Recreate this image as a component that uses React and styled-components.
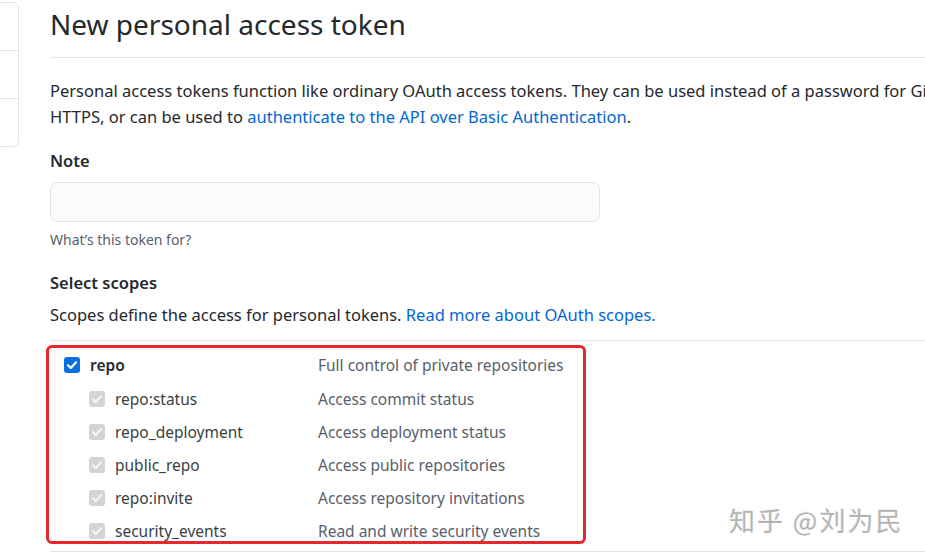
import React from 'react'
import styled, { createGlobalStyle } from 'styled-components'

const GlobalStyle = createGlobalStyle`
  html, body {
    margin: 0;
    padding: 0;
    background: #fff;
    overflow: hidden;
  }
  body {
    width: 925px;
    height: 560px;
    font-family: "Noto Sans", "Open Sans", Arial, sans-serif;
    color: #24292e;
  }
`

const scopes = [
  { name: 'repo', desc: 'Full control of private repositories', main: true },
  { name: 'repo:status', desc: 'Access commit status' },
  { name: 'repo_deployment', desc: 'Access deployment status' },
  { name: 'public_repo', desc: 'Access public repositories' },
  { name: 'repo:invite', desc: 'Access repository invitations' },
  { name: 'security_events', desc: 'Read and write security events' },
]

const Check = ({ disabled }) => (
  <Box disabled={disabled}>
    <svg width="12" height="12" viewBox="0 0 12 12">
      <path d="M2 6.2 L4.8 9 L10 3.2" fill="none" strokeWidth="2.2" strokeLinecap="round" strokeLinejoin="round" />
    </svg>
  </Box>
)

const App = () => {
  return (
    <Page>
      <GlobalStyle />
      <Sidebar>
        <SideItem />
        <SideItem />
        <SideItem />
      </Sidebar>
      <Main>
        <Title>New personal access token</Title>
        <Intro>
          <Line>Personal access tokens function like ordinary OAuth access tokens. They can be used instead of a password for Git over</Line>
          <Line>HTTPS, or can be used to <Link>authenticate to the API over Basic Authentication</Link>.</Line>
        </Intro>
        <Label>Note</Label>
        <Input />
        <Hint>What’s this token for?</Hint>
        <Label top="21px">Select scopes</Label>
        <Desc>
          Scopes define the access for personal tokens. <Link>Read more about OAuth scopes.</Link>
        </Desc>
        <ScopeGroup>
          <Highlight>
            {scopes.map((s) => (
              <ScopeRow key={s.name} main={s.main}>
                <ScopeName main={s.main}>
                  <Check disabled={!s.main} />
                  <span>{s.name}</span>
                </ScopeName>
                <ScopeDesc>{s.desc}</ScopeDesc>
              </ScopeRow>
            ))}
          </Highlight>
        </ScopeGroup>
        <ScopeGroup />
      </Main>
      <Watermark>知乎 @刘为民</Watermark>
    </Page>
  )
}

export default App

const Page = styled.div`
  position: relative;
  display: flex;
  align-items: flex-start;
  gap: 31px;
  width: 925px;
  height: 560px;
  overflow: hidden;
`
const Sidebar = styled.div`
  flex: none;
  width: 40px;
  margin-left: -21px;
  margin-top: 2px;
  border: 1px solid #e1e4e8;
  border-radius: 6px;
  box-sizing: border-box;
`
const SideItem = styled.div`
  height: 47px;
  & + & {
    border-top: 1px solid #e1e4e8;
  }
`
const Main = styled.div`
  flex: none;
  width: 1000px;
`
const Title = styled.h1`
  margin: 0;
  padding-top: 4px;
  height: 58px;
  box-sizing: border-box;
  border-bottom: 1px solid #e1e4e8;
  font-size: 28px;
  font-weight: 400;
  line-height: 40px;
  color: #24292e;
`
const Intro = styled.div`
  margin-top: 20px;
  font-size: 16.5px;
  line-height: 26px;
  color: #24292e;
`
const Line = styled.div`
  white-space: nowrap;
`
const Link = styled.span`
  color: #0366d6;
`
const Label = styled.div`
  margin-top: ${(p) => p.top || '19px'};
  font-size: 16.5px;
  font-weight: 600;
  line-height: 24px;
`
const Input = styled.div`
  margin-top: 9px;
  width: 550px;
  height: 40px;
  box-sizing: border-box;
  border: 1px solid #e1e4e8;
  border-radius: 7px;
  background: #fafbfc;
`
const Hint = styled.div`
  margin-top: 8px;
  font-size: 14px;
  line-height: 20px;
  color: #586069;
`
const Desc = styled.div`
  margin-top: 8px;
  font-size: 16.5px;
  line-height: 24px;
`
const ScopeGroup = styled.div`
  margin-top: 13px;
  border-top: 1px solid #e1e4e8;
  & + & {
    margin-top: 7px;
  }
`
const Highlight = styled.div`
  margin: 4px 0 0 -4px;
  width: 540px;
  height: 199px;
  box-sizing: border-box;
  border: 3px solid #e8262b;
  border-radius: 6px;
  padding-left: 15px;
`
const ScopeRow = styled.div`
  display: grid;
  grid-template-columns: 254px 1fr;
  align-items: center;
  height: ${(p) => (p.main ? '34px' : '33px')};
  font-size: 15.5px;
`
const ScopeName = styled.div`
  display: flex;
  align-items: center;
  gap: 10px;
  padding-left: ${(p) => (p.main ? '0' : '25px')};
  font-weight: ${(p) => (p.main ? 600 : 400)};
  color: ${(p) => (p.main ? '#24292e' : '#3a3f44')};
`
const ScopeDesc = styled.div`
  color: #586069;
`
const Box = styled.span`
  display: inline-flex;
  align-items: center;
  justify-content: center;
  width: 16px;
  height: 16px;
  border-radius: 3px;
  background: ${(p) => (p.disabled ? '#d4d4d4' : '#0a6fe0')};
  svg path {
    stroke: ${(p) => (p.disabled ? '#f4f4f4' : '#fff')};
  }
`
const Watermark = styled.div`
  position: absolute;
  left: 729px;
  top: 502px;
  font-family: "Noto Sans CJK SC", sans-serif;
  font-size: 26px;
  line-height: 36px;
  color: #b4b4b4;
  text-shadow: 1px 1px 0 #fff, -1px -1px 0 #f0f0f0;
  letter-spacing: 2px;
`
